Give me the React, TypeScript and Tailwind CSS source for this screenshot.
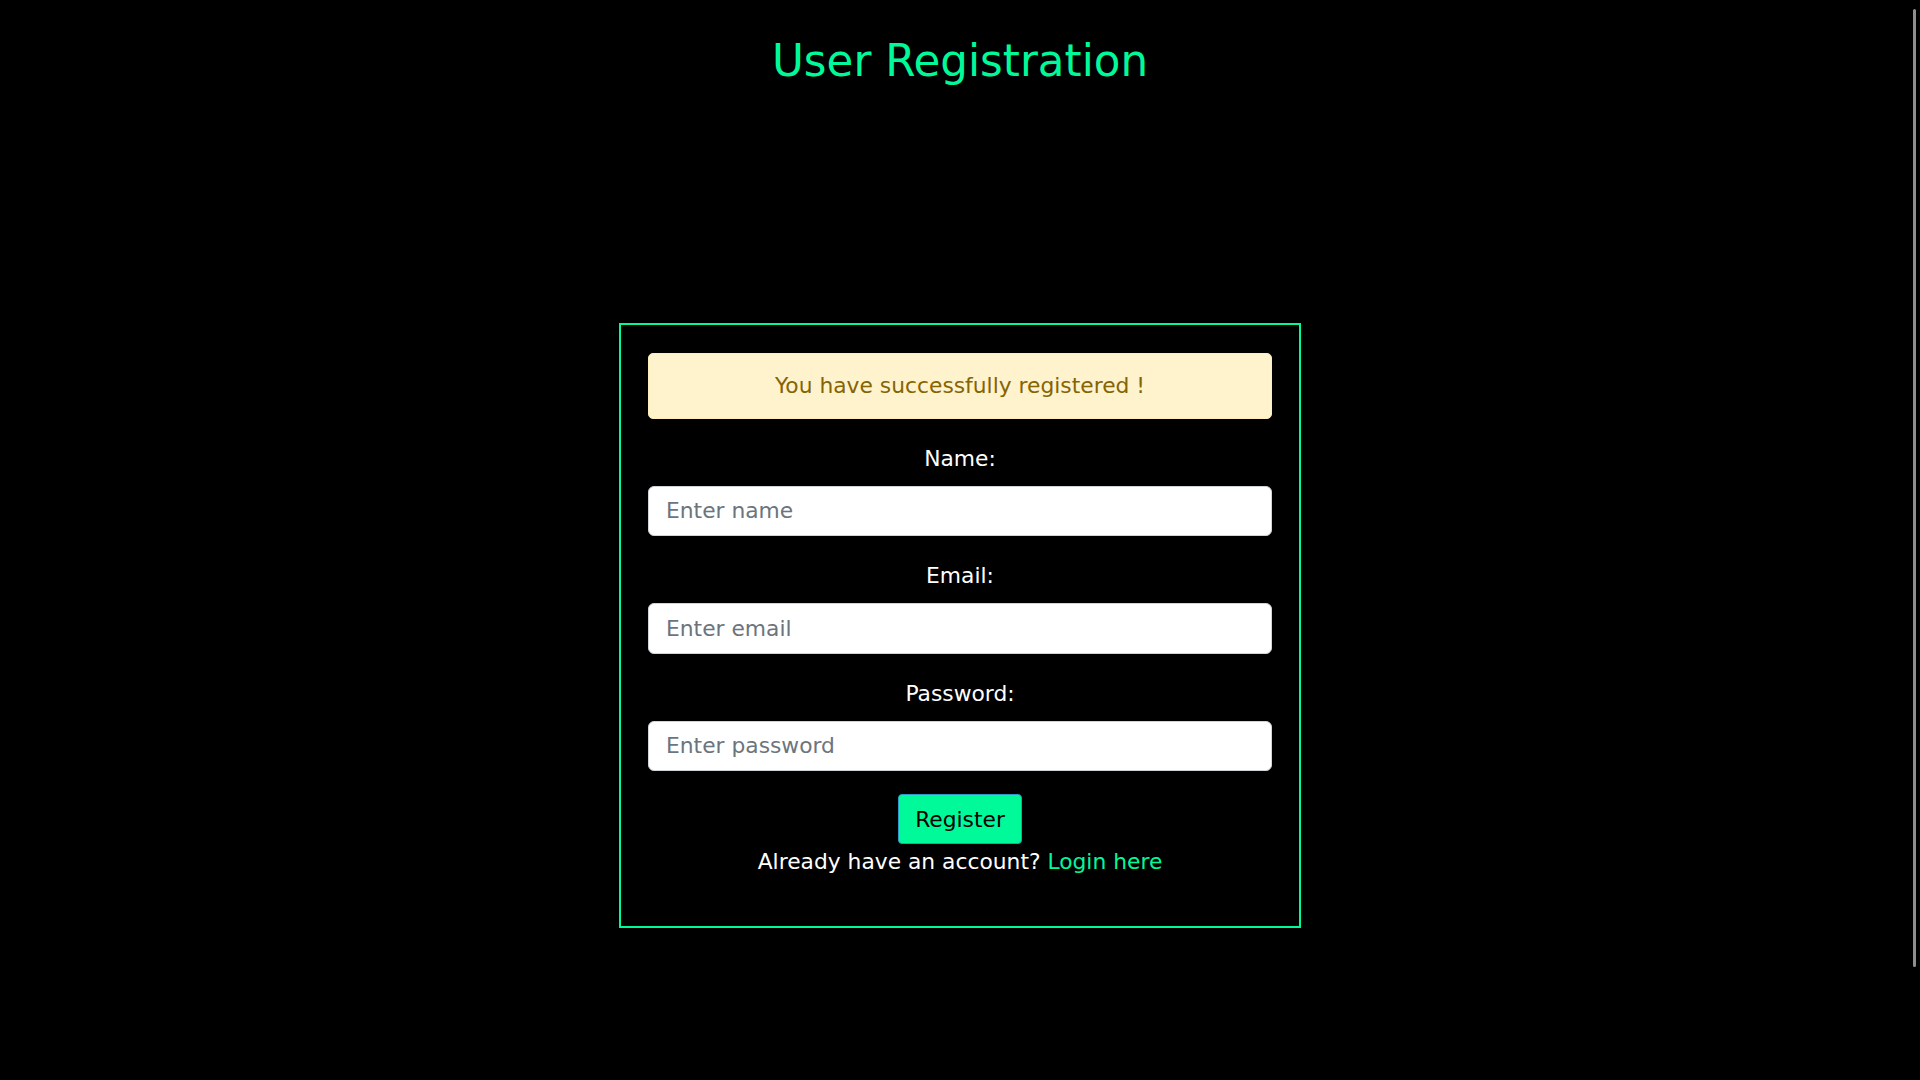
import { useState } from "react";

const font = { fontFamily: '"DejaVu Sans", Verdana, sans-serif' };

function Field({
  label,
  type,
  placeholder,
  value,
  onChange,
}: {
  label: string;
  type: string;
  placeholder: string;
  value: string;
  onChange: (v: string) => void;
}) {
  return (
    <div className="flex flex-col">
      <label className="mt-[27px] mb-[14px] text-center text-[21.8px] leading-[26px] text-white">{label}</label>
      <input
        type={type}
        placeholder={placeholder}
        value={value}
        onChange={(e) => onChange(e.target.value)}
        className="h-[50.5px] w-full rounded-[6px] border border-[#ced4da] bg-white px-[17px] text-[21.8px] text-[#212529] outline-none placeholder:text-[#6c757d]"
        style={font}
      />
    </div>
  );
}

export default function App() {
  const [name, setName] = useState("");
  const [email, setEmail] = useState("");
  const [password, setPassword] = useState("");

  return (
    <div className="relative h-screen overflow-hidden bg-black" style={font}>
      <h1 className="mt-[40px] text-center text-[43.6px] font-normal leading-none text-[#00fa9a]">
        User Registration
      </h1>

      <div className="mx-auto mt-[239px] w-[682px] border-2 border-[#00fa9a] px-[27px] pt-[28px] pb-[51px]">
        <div className="flex h-[66px] items-center justify-center rounded-[5px] border border-[#ffeeba] bg-[#fff3cd] pt-[2px] text-[21.8px] text-[#856404]">
          You have successfully registered !
        </div>

        <Field label="Name:" type="text" placeholder="Enter name" value={name} onChange={setName} />
        <Field label="Email:" type="email" placeholder="Enter email" value={email} onChange={setEmail} />
        <Field
          label="Password:"
          type="password"
          placeholder="Enter password"
          value={password}
          onChange={setPassword}
        />

        <div className="mt-[23px] flex justify-center">
          <button
            type="button"
            className="h-[50px] rounded-[4px] border border-[#2b9bc4] bg-[#00fa9a] px-[16px] pt-[2px] text-[21.8px] text-black"
            style={font}
          >
            Register
          </button>
        </div>

        <p className="mt-[5px] text-center text-[21.8px] leading-[26px] text-white">
          Already have an account?{" "}
          <a href="#" className="text-[#00fa9a]">
            Login here
          </a>
        </p>
      </div>

      {/* overlay scrollbar thumb */}
      <div className="pointer-events-none absolute top-[9px] right-[4px] h-[958px] w-[3px] rounded-full bg-[#8e8e8e]" />
    </div>
  );
}
